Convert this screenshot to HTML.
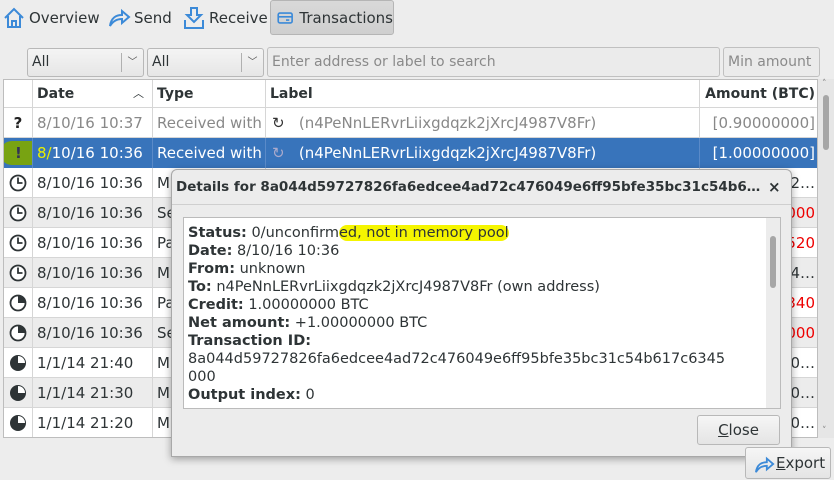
<!DOCTYPE html>
<html><head><style>
*{box-sizing:border-box;margin:0;padding:0}
body{width:834px;height:480px;overflow:hidden;background:#ededed;font-family:"DejaVu Sans","Liberation Sans",sans-serif;font-size:14px;color:#2e3436;position:relative}
.abs{position:absolute}
.tbtn{position:absolute;top:0;height:35px;display:flex;align-items:center;font-size:15px}
.combo{top:48px;height:29px;background:linear-gradient(#f4f4f4,#e6e6e6);border:1px solid #b8b8b8;border-radius:3px;padding-left:4px;line-height:27px}
.combo .ar{position:absolute;right:0;top:4px;width:22px;height:19px;border-left:1px solid #b0b0b0;text-align:center;font-size:10px;line-height:19px;color:#555}
.inp{top:47px;height:30px;border:1px solid #c0c0c0;border-radius:3px;background:#ebebeb;color:#8a8a8a;padding-left:4px;line-height:28px}
.table{left:3px;top:79px;width:815px;height:359px;background:#fff;border:1px solid #bdbdbd;overflow:hidden;font-size:15px}
.row{position:absolute;left:0;width:815px;height:30px;line-height:30px;border-bottom:1px solid #d6d6d6}
.c{position:absolute;top:0;height:30px;border-right:1px solid #d6d6d6;white-space:nowrap;overflow:hidden;padding-left:4px}
.dlg{left:171px;top:169px;width:621px;height:288px;background:#ececec;border:1px solid #a8a8a8;border-radius:6px 6px 0 0;box-shadow:0 2px 8px rgba(0,0,0,.35)}
</style></head><body>
<div class="tbtn" style="left:2px"><svg width="24" height="24" viewBox="0 0 24 24"><path d="M3 12 L12 3 L21 12 M6 10 V21 H18 V10 M10 21 V15 H14 V21" fill="none" stroke="#3c8ad8" stroke-width="2"/></svg><span style="margin-left:3px">Overview</span></div>
<div class="tbtn" style="left:107px"><svg width="24" height="24" viewBox="0 0 24 24"><path d="M3 20 C4 12 9 9 15 9 V5 L22 11 L15 17 V13 C10 13 6 15 3 20Z" fill="none" stroke="#3c8ad8" stroke-width="2"/></svg><span style="margin-left:3px">Send</span></div>
<div class="tbtn" style="left:183px"><svg width="22" height="24" viewBox="0 0 22 24"><path d="M8 2 H14 V9 H18 L11 16 L4 9 H8Z M2 14 V22 H20 V14" fill="none" stroke="#3c8ad8" stroke-width="2"/></svg><span style="margin-left:4px">Receive</span></div>
<div class="tbtn" style="left:270px;width:124px;height:35px;background:linear-gradient(#d9d9d9,#cfcfcf);border:1px solid #b5b5b5;border-radius:3px;padding-left:6px"><svg width="20" height="16" viewBox="0 0 20 16"><rect x="1.5" y="2" width="17" height="12" rx="2" fill="none" stroke="#3c8ad8" stroke-width="2"/><path d="M2 6.5H18M11 10.5H15" stroke="#3c8ad8" stroke-width="2"/></svg><span style="margin-left:6px">Transactions</span></div>

<div class="abs combo" style="left:27px;width:117px">All<div class="ar">﹀</div></div>
<div class="abs combo" style="left:147px;width:117px">All<div class="ar">﹀</div></div>
<div class="abs inp" style="left:267px;width:453px">Enter address or label to search</div>
<div class="abs inp" style="left:723px;width:97px">Min amount</div>

<div class="abs table">
 <div class="row" style="top:0;height:28px;line-height:28px;font-weight:bold;color:#2e3436;font-size:14px">
  <div class="c" style="left:0;width:29px;height:28px"></div>
  <div class="c" style="left:29px;width:120px;height:28px">Date<span style="position:absolute;right:8px;font-weight:normal;font-size:11px">︿</span></div>
  <div class="c" style="left:149px;width:113px;height:28px">Type</div>
  <div class="c" style="left:262px;width:434px;height:28px">Label</div>
  <div class="c" style="left:696px;width:119px;height:28px;text-align:right;padding-right:4px;border:none">Amount (BTC)</div>
 </div>
 <div class="row" style="top:28px;color:#888">
  <div class="c" style="left:0;width:29px;color:#222;font-weight:bold;text-align:center;padding:0">?</div>
  <div class="c" style="left:29px;width:120px">8/10/16 10:37</div>
  <div class="c" style="left:149px;width:113px">Received with</div>
  <div class="c" style="left:262px;width:434px;padding-left:6px"><span style="color:#333">↻</span>&nbsp;&nbsp;&nbsp;(n4PeNnLERvrLiixgdqzk2jXrcJ4987V8Fr)</div>
  <div class="c" style="left:696px;width:119px;text-align:right;padding-right:4px;border:none">[0.90000000]</div>
 </div>
 <div class="row" style="top:58px;background:#3874bb;color:#fff;border-bottom:none">
  <div class="c" style="left:0;width:29px;padding:0;border-color:#5a8ac8"><div style="position:absolute;left:-4px;top:3px;width:52px;height:24px;background:#7fa800;border-radius:12px;opacity:.9"></div><span style="position:absolute;left:11px;color:#335;font-weight:bold">!</span></div>
  <div class="c" style="left:29px;width:120px;border-color:#5a8ac8"><span style="color:#e8f000">8/</span>10/16 10:36</div>
  <div class="c" style="left:149px;width:113px;border-color:#5a8ac8">Received with</div>
  <div class="c" style="left:262px;width:434px;padding-left:6px;border-color:#5a8ac8"><span style="color:#aac">↻</span>&nbsp;&nbsp;&nbsp;(n4PeNnLERvrLiixgdqzk2jXrcJ4987V8Fr)</div>
  <div class="c" style="left:696px;width:119px;text-align:right;padding-right:4px;border:none">[1.00000000]</div>
 </div>
 <div id="rows"></div>
</div>
<div class="abs" style="left:818px;top:79px;width:16px;height:359px;background:#e6e6e6"><div style="position:absolute;left:5px;top:16px;width:6px;height:55px;background:#a6a6a6;border-radius:3px"></div><div style="position:absolute;left:4px;top:0;font-size:9px;color:#888">˄</div><div style="position:absolute;left:4px;bottom:2px;font-size:9px;color:#888">˅</div></div>

<div class="abs dlg">
 <div style="position:absolute;left:0;top:0;width:619px;height:35px;border-bottom:1px solid #cfcfcf;font-weight:bold;font-size:13.5px;line-height:35px;padding-left:4px;white-space:nowrap"><span style="display:inline-block;width:590px;overflow:hidden;text-overflow:ellipsis;white-space:nowrap;vertical-align:top">Details for 8a044d59727826fa6edcee4ad72c476049e6ff95bfe35bc31c54b617c6345000</span><span style="position:absolute;left:596px;font-size:15px">×</span></div>
 <div style="position:absolute;left:11px;top:47px;width:598px;height:192px;background:#fff;border:1px solid #bbb;padding:6px 4px;font-size:14.5px;line-height:18px;color:#2e3436;white-space:nowrap;overflow:hidden">
  <b>Status:</b> 0/unconfirm<span style="background:#f5f500;border-radius:8px">ed, not in memory pool</span><br>
  <b>Date:</b> 8/10/16 10:36<br><b>From:</b> unknown<br><b>To:</b> n4PeNnLERvrLiixgdqzk2jXrcJ4987V8Fr (own address)<br>
  <b>Credit:</b> 1.00000000 BTC<br><b>Net amount:</b> +1.00000000 BTC<br><b>Transaction ID:</b><br>8a044d59727826fa6edcee4ad72c476049e6ff95bfe35bc31c54b617c6345<br>000<br><b>Output index:</b> 0
  <div style="position:absolute;right:0;top:0;width:14px;height:190px;background:#ececec"><div style="position:absolute;left:4px;top:18px;width:6px;height:52px;background:#a6a6a6;border-radius:3px"></div></div>
 </div>
 <div style="position:absolute;left:525px;top:245px;width:83px;height:30px;border:1px solid #b8b8b8;border-radius:3px;background:linear-gradient(#f6f6f6,#e4e4e4);text-align:center;line-height:28px;font-size:15px"><u>C</u>lose</div>
</div>
<div class="abs" style="left:745px;top:447px;width:86px;height:32px;border:1px solid #b8b8b8;border-radius:3px;background:linear-gradient(#f6f6f6,#e4e4e4);line-height:30px;padding-left:8px;font-size:15px"><svg width="22" height="20" viewBox="0 0 24 22" style="vertical-align:middle"><path d="M2 20 C3 12 8 9 14 9 V5 L21 11 L14 17 V13 C9 13 5 15 2 20Z" fill="none" stroke="#3c8ad8" stroke-width="2"/></svg><u>E</u>xport</div>
<script>
var d=[["8/10/16 10:36","Mi","2…",0,"c"],["8/10/16 10:36","Se","000",1,"c"],["8/10/16 10:36","Pa","520",1,"c"],["8/10/16 10:36","Mi","4…",0,"c"],["8/10/16 10:36","Pa","340",1,"p"],["8/10/16 10:36","Se","000",1,"p"],["1/1/14 21:40","Mi","0…",0,"f"],["1/1/14 21:30","Mi","0…",0,"f"],["1/1/14 21:20","Mi","0…",0,"f"]];
var h="";d.forEach(function(r,i){var top=88+i*30;var bg=i%2?"#ececec":"#fff";
var ic='<svg width="20" height="20" viewBox="0 0 20 20" style="position:absolute;left:4px;top:5px">'+(r[4]=="f"?'<circle cx="10" cy="10" r="8" fill="#2e3436"/><path d="M10 10V3A7 7 0 0 1 17 10Z" fill="#fff"/>':'<circle cx="10" cy="10" r="7.5" fill="#fff" stroke="#2e3436" stroke-width="1.8"/>'+(r[4]=="p"?'<path d="M10 10V2.5A7.5 7.5 0 0 1 17.5 10Z" fill="#2e3436"/>':'<path d="M10 4.5V10H14.5" fill="none" stroke="#2e3436" stroke-width="1.8"/>'))+'</svg>';
h+='<div class="row" style="top:'+top+'px;background:'+bg+'"><div class="c" style="left:0;width:29px">'+ic+'</div><div class="c" style="left:29px;width:120px">'+r[0]+'</div><div class="c" style="left:149px;width:113px">'+r[1]+'</div><div class="c" style="left:262px;width:434px"></div><div class="c" style="left:696px;width:119px;text-align:right;padding-right:4px;border:none;color:'+(r[3]?"#e00":"#2e3436")+'">'+r[2]+'</div></div>';});
document.getElementById("rows").innerHTML=h;
</script>
</body></html>
